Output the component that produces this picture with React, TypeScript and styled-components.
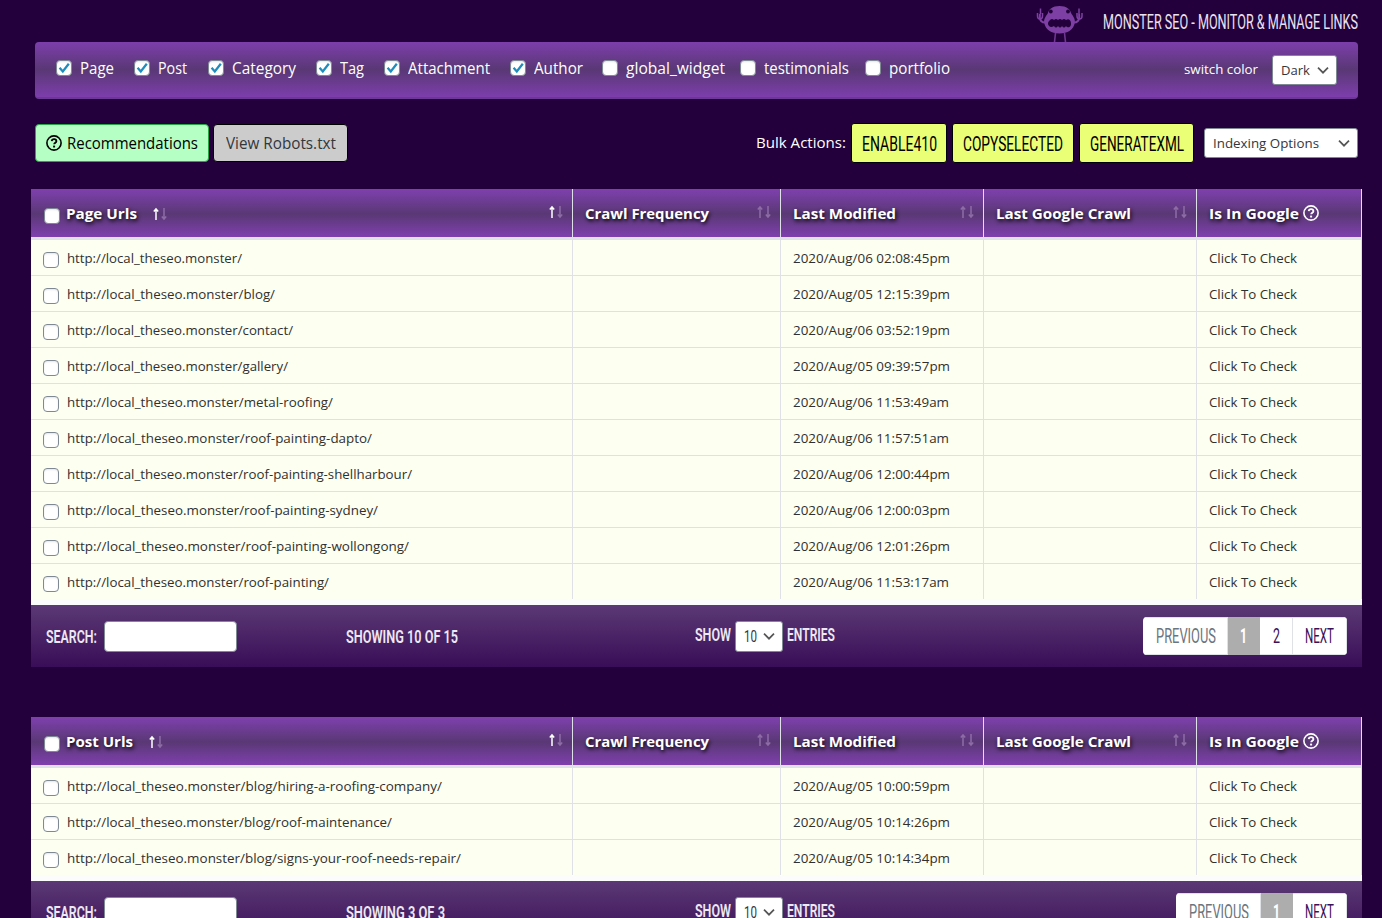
import React, { useLayoutEffect, useRef } from "react";
import styled, { createGlobalStyle } from "styled-components";

const sans = `"Open Sans", "Noto Sans", sans-serif`;
const narrow = `"Liberation Sans Narrow", Roboto, "Liberation Sans", sans-serif`;

const GlobalStyle = createGlobalStyle`
  * { box-sizing: border-box; }
  body { margin: 0; background: #23003b; overflow: hidden; font-family: ${sans}; }
`;

/* Text condensed or widened to a set width */
const FitBox = styled.span<{ $w: number }>`
  display: inline-block;
  width: ${(p) => p.$w}px;
  flex: none;
  white-space: nowrap;
`;
const FitInner = styled.span`
  display: inline-block;
  transform-origin: 0 50%;
`;
function Fit({ w, children }: { w: number; children: React.ReactNode }) {
  const ref = useRef<HTMLSpanElement>(null);
  useLayoutEffect(() => {
    const el = ref.current;
    if (el && el.offsetWidth) {
      el.style.transform = "none";
      el.style.transform = `scaleX(${w / el.getBoundingClientRect().width})`;
    }
  }, [w, children]);
  return (
    <FitBox $w={w}>
      <FitInner ref={ref}>{children}</FitInner>
    </FitBox>
  );
}

const Page = styled.div`
  height: 918px;
  overflow: hidden;
`;
const Brand = styled.header`
  height: 42px;
  padding-right: 24px;
  display: flex;
  justify-content: flex-end;
  gap: 19px;
`;
const BrandTitle = styled.div`
  font: 400 19.5px/46px ${narrow};
  color: #e9e2ef;
`;
const Filters = styled.div`
  height: 57px;
  margin: 0 24px 0 35px;
  padding: 0 21px;
  border-radius: 4px;
  border-bottom: 2px solid #6d3797;
  background: linear-gradient(#7d3eac, #593874 50%, #7d3eac);
  display: flex;
  color: #fff;
  font-size: 15.5px;
`;
const Filter = styled.label<{ $w: number }>`
  width: ${(p) => p.$w}px;
  flex: none;
  display: flex;
  align-items: center;
  gap: 8px;
  height: 52px;
`;
const Box = styled.span<{ $drop?: number }>`
  width: 16px;
  height: 16px;
  flex: none;
  display: block;
  border: 1px solid #7e8993;
  border-radius: 4px;
  background: #fff;
  box-shadow: inset 0 1px 2px rgba(0, 0, 0, 0.1);
  margin-top: ${(p) => p.$drop || 0}px;
  svg { display: block; }
`;
const Switch = styled.div`
  margin-left: auto;
  display: flex;
  align-items: center;
  gap: 14px;
  font-size: 12.5px;
  height: 55px;
`;
const Select = styled.div<{ $w: number; $h: number; $pad: number }>`
  width: ${(p) => p.$w}px;
  height: ${(p) => p.$h}px;
  flex: none;
  border: 1px solid #7e8993;
  border-radius: 3px;
  background: #fff;
  color: #32373c;
  display: flex;
  align-items: center;
  justify-content: space-between;
  padding: 0 7px 0 ${(p) => p.$pad}px;
  font-size: 13px;
`;
const Actions = styled.div`
  display: flex;
  align-items: center;
  margin: 24px 24px 0 35px;
  height: 40px;
`;
const Button = styled.button<{ $w: number; $bg: string; $line: string; $color: string }>`
  width: ${(p) => p.$w}px;
  height: 38px;
  flex: none;
  padding: 0;
  border: 1px solid ${(p) => p.$line};
  border-radius: 4px;
  background: ${(p) => p.$bg};
  color: ${(p) => p.$color};
  display: flex;
  align-items: center;
  justify-content: center;
  gap: 5px;
  font: 400 15.5px ${sans};
  margin-right: 4px;
`;
const Bulk = styled.div`
  margin-left: auto;
  display: flex;
  align-items: center;
  color: #fff;
  font-size: 15px;
`;
const BulkLabel = styled.div`
  margin: -2px 5px 0 0;
`;
const BulkButton = styled.button<{ $w: number }>`
  width: ${(p) => p.$w}px;
  height: 40px;
  padding: 0;
  border: 1px solid #000;
  border-radius: 3px;
  background: #eaff75;
  color: #000;
  font: 400 21px ${narrow};
  line-height: 40px;
  margin-right: 5px;
`;
const BulkSelect = styled.div`
  margin-left: 5px;
`;
const Table = styled.section`
  margin: 26px 20px 50px 31px;
  background: #fcfcfc;
`;
const columns = "542px 208px 203px 213px 165px";
const HeadRow = styled.div`
  display: grid;
  grid-template-columns: ${columns};
  height: 51px;
  border-bottom: 3px solid #dee2e6;
  background: linear-gradient(#7f40ae, #593874 52%, #7f40ae);
`;
const HeadCell = styled.div`
  display: flex;
  align-items: center;
  padding: 0 8px 0 12px;
  border-right: 1px solid #dee2e6;
  color: #fff;
  font-size: 15px;
  font-weight: 700;
  text-shadow: 1px 2px 4px #000;
`;
const Arrows = styled.svg<{ $push?: boolean }>`
  width: 16px;
  height: 14px;
  flex: none;
  margin-left: ${(p) => (p.$push ? "auto" : "15px")};
  margin-bottom: ${(p) => (p.$push ? "3px" : "0")};
  margin-top: ${(p) => (p.$push ? "0" : "2px")};
`;
const Row = styled.div`
  display: grid;
  grid-template-columns: ${columns};
  height: 36px;
  background: #fdfff1;
  &:last-child { height: 35px; }
`;
const Cell = styled.div`
  display: flex;
  align-items: center;
  padding: 0 12px;
  border-right: 1px solid #dee2e6;
  border-bottom: 1px solid #dee2e6;
  font-size: 13.2px;
  color: #303030;
  ${Row}:last-child & { border-bottom: 0; }
`;
const Gap = styled.span<{ $w: number }>`
  width: ${(p) => p.$w}px;
  flex: none;
`;
const Foot = styled.div`
  margin-top: 6px;
  height: 62px;
  padding: 0 15px;
  display: flex;
  align-items: center;
  background: linear-gradient(#5b3975, #390d57);
  color: #eee8f2;
  font: 600 19px ${narrow};
`;
const Search = styled.div`
  width: 300px;
  display: flex;
  align-items: center;
  gap: 7px;
`;
const Input = styled.div`
  width: 133px;
  height: 31px;
  border: 1px solid #7e8993;
  border-radius: 4px;
  background: #fff;
`;
const Showing = styled.div`
  width: 349px;
`;
const Length = styled.div`
  display: flex;
  align-items: center;
  gap: 4px;
  > span { margin-top: -3px; }
  ${Select} { font: 400 16px ${narrow}; }
`;
const Pager = styled.div`
  margin-left: auto;
  display: flex;
  height: 38px;
  border-radius: 4px;
  overflow: hidden;
  font-weight: 400;
  font-size: 20px;
  background: #fff;
`;
const PageLink = styled.a<{ $w: number; $kind?: "off" | "on" }>`
  width: ${(p) => p.$w}px;
  display: flex;
  align-items: center;
  justify-content: center;
  border: 1px solid #dee2e6;
  border-left-width: 0;
  color: ${(p) => (p.$kind === "off" ? "#6c757d" : p.$kind === "on" ? "#fff" : "#3a1059")};
  ${(p) => p.$kind === "on" && "background:#adadad;border-color:#adadad;font-weight:700;"}
`;

const Monster = () => (
  <svg width="48" height="42" viewBox="0 0 48 42" fill="none">
    <path d="M13 22C5 24 3 20 4 14M34 22c8 2 10-2 9-8" stroke="#7d3fa3" strokeWidth="2" />
    <path d="M1.500 13v3q0 3 2.500 3t2.500-3v-3M4.500 14V8.500M46 13v3q0 3-2.500 3T41 16v-3M43 14V8.500" stroke="#7d3fa3" strokeWidth="1.500" />
    <path d="M23.500 6c7 0 11 3.500 11.500 7 2 3 4.500 6 3.800 10-1.300 6.500-7 10.500-15.300 10.500S9.500 29.500 8.200 23C7.500 19 10 16 12 13c.5-3.500 4.500-7 11.500-7Z" fill="#7d3fa3" />
    <path d="M19.500 33 18.500 42M28.500 33 29.500 42" stroke="#6d3790" strokeWidth="1.600" />
    <g fill="#23003b">
      <circle cx="14.800" cy="11.500" r="1.900" />
      <circle cx="32" cy="11.500" r="1.900" />
      <path d="M14 20q2-2 4 0 2-2 4 0 2-2 4 0 2-2 4 0 3-2 4.500 1 1.500 4-1 6-2.500 1-3.500-1-2 3-4 0-2 3-4 0-2 3-4 0-3 2-5 0-2.500-3 1-6Z" />
    </g>
  </svg>
);
const Check = ({ on, drop }: { on?: boolean; drop?: number }) => (
  <Box $drop={drop}>
    {on && (
      <svg width="14" height="14" viewBox="0 0 14 14">
        <path d="M2.600 6.800 5.800 10.400 11.800 2.800" fill="none" stroke="#1e8cbe" strokeWidth="2.300" />
      </svg>
    )}
  </Box>
);
const Chevron = () => (
  <svg width="12" height="8" viewBox="0 0 12 8">
    <path d="M1 1.700 6 6.700 11 1.700" fill="none" stroke="#555" strokeWidth="1.700" />
  </svg>
);
const Question = () => (
  <svg width="16" height="16" viewBox="0 0 16 16" fill="none" stroke="currentColor">
    <circle cx="8" cy="8" r="7.100" strokeWidth="1.600" />
    <path d="M5.700 6.200C5.900 4.700 7 4.200 8.100 4.200c1.300 0 2.300.8 2.300 2 0 1.500-2.200 1.500-2.200 3.100" strokeWidth="1.800" />
    <path d="M8.100 10.600v1.900" strokeWidth="2" />
  </svg>
);
const Sort = ({ up, push }: { up?: boolean; push?: boolean }) => (
  <Arrows $push={push} viewBox="0 0 16 14" fill="none" strokeWidth="1.500">
    <path d="M4 13V2M1.800 4.500 4 2 6.200 4.500" stroke={up ? "#fff" : "#8d6ca6"} />
    <path d="M12 1v11M9.800 9.500 12 12l2.200-2.500" stroke="#8d6ca6" />
  </Arrows>
);

const filters: [string, number, number, boolean][] = [
  ["Page", 34, 78, true],
  ["Post", 29, 74, true],
  ["Category", 64, 108, true],
  ["Tag", 24, 68, true],
  ["Attachment", 82, 126, true],
  ["Author", 49, 92, true],
  ["global_widget", 99, 138, false],
  ["testimonials", 85, 125, false],
  ["portfolio", 61, 90, false],
];
const site = "http://local_theseo.monster/";
type Link = [string, number, string];
const pages: Link[] = [
  ["", 175, "2020/Aug/06 02:08:45pm"],
  ["blog/", 208, "2020/Aug/05 12:15:39pm"],
  ["contact/", 226, "2020/Aug/06 03:52:19pm"],
  ["gallery/", 221, "2020/Aug/05 09:39:57pm"],
  ["metal-roofing/", 266, "2020/Aug/06 11:53:49am"],
  ["roof-painting-dapto/", 305, "2020/Aug/06 11:57:51am"],
  ["roof-painting-shellharbour/", 345, "2020/Aug/06 12:00:44pm"],
  ["roof-painting-sydney/", 311, "2020/Aug/06 12:00:03pm"],
  ["roof-painting-wollongong/", 342, "2020/Aug/06 12:01:26pm"],
  ["roof-painting/", 262, "2020/Aug/06 11:53:17am"],
];
const posts: Link[] = [
  ["blog/hiring-a-roofing-company/", 375, "2020/Aug/05 10:00:59pm"],
  ["blog/roof-maintenance/", 325, "2020/Aug/05 10:14:26pm"],
  ["blog/signs-your-roof-needs-repair/", 394, "2020/Aug/05 10:14:34pm"],
];

interface TableProps {
  title: string;
  titleWidth: number;
  links: Link[];
  showing: string;
  showingWidth: number;
  second?: boolean;
}
function UrlTable({ title, titleWidth, links, showing, showingWidth, second }: TableProps) {
  return (
    <Table>
      <HeadRow>
        <HeadCell>
          <Gap $w={1} />
          <Check drop={5} />
          <Gap $w={6} />
          <Fit w={titleWidth}>{title}</Fit>
          <Sort up />
          <Sort up push />
        </HeadCell>
        <HeadCell><Fit w={124}>Crawl Frequency</Fit><Sort push /></HeadCell>
        <HeadCell><Fit w={103}>Last Modified</Fit><Sort push /></HeadCell>
        <HeadCell><Fit w={135}>Last Google Crawl</Fit><Sort push /></HeadCell>
        <HeadCell><Fit w={90}>Is In Google</Fit><Gap $w={4} /><Question /></HeadCell>
      </HeadRow>
      <div>
        {links.map(([path, width, date]) => (
          <Row key={path}>
            <Cell>
              <Check drop={4} />
              <Gap $w={8} />
              <Fit w={width}>{site + path}</Fit>
            </Cell>
            <Cell />
            <Cell><Fit w={date.endsWith("am") ? 156 : 157}>{date}</Fit></Cell>
            <Cell />
            <Cell><Fit w={88}>Click To Check</Fit></Cell>
          </Row>
        ))}
      </div>
      <Foot>
        <Search><Fit w={51}>SEARCH:</Fit><Input /></Search>
        <Showing><Fit w={showingWidth}>{showing}</Fit></Showing>
        <Length>
          <Fit w={36}>SHOW</Fit>
          <Select $w={48} $h={31} $pad={8}><Fit w={13}>10</Fit><Chevron /></Select>
          <Fit w={48}>ENTRIES</Fit>
        </Length>
        <Pager>
          <PageLink $w={85} $kind="off"><Gap $w={1} /><Fit w={60}>PREVIOUS</Fit></PageLink>
          <PageLink $w={32} $kind="on"><Fit w={7}>1</Fit></PageLink>
          {second && <PageLink $w={33}><Fit w={7}>2</Fit></PageLink>}
          <PageLink $w={54}><Fit w={29}>NEXT</Fit></PageLink>
        </Pager>
      </Foot>
    </Table>
  );
}

export default function App() {
  return (
    <Page>
      <GlobalStyle />
      <Brand>
        <Monster />
        <BrandTitle><Fit w={255}>MONSTER SEO - MONITOR &amp; MANAGE LINKS</Fit></BrandTitle>
      </Brand>
      <Filters>
        {filters.map(([name, w, step, on]) => (
          <Filter key={name} $w={step}>
            <Check on={on} />
            <Fit w={w}>{name}</Fit>
          </Filter>
        ))}
        <Switch>
          <Fit w={74}>switch color</Fit>
          <Select $w={65} $h={30} $pad={8}><Fit w={29}>Dark</Fit><Chevron /></Select>
        </Switch>
      </Filters>
      <Actions>
        <Button $w={174} $bg="#b5ffc4" $line="#28a745" $color="#000">
          <Question />
          <Fit w={131}>Recommendations</Fit>
        </Button>
        <Button $w={135} $bg="#ccc" $line="#000" $color="#32373c">
          <Fit w={110}>View Robots.txt</Fit>
        </Button>
        <Bulk>
          <BulkLabel><Fit w={90}>Bulk Actions:</Fit></BulkLabel>
          <BulkButton $w={96}><Fit w={75}>ENABLE410</Fit></BulkButton>
          <BulkButton $w={122}><Fit w={100}>COPYSELECTED</Fit></BulkButton>
          <BulkButton $w={115}><Fit w={94}>GENERATEXML</Fit></BulkButton>
          <BulkSelect>
            <Select $w={154} $h={30} $pad={8}><Fit w={106}>Indexing Options</Fit><Chevron /></Select>
          </BulkSelect>
        </Bulk>
      </Actions>
      <UrlTable title="Page Urls" titleWidth={71} links={pages} showing="SHOWING 10 OF 15" showingWidth={112} second />
      <UrlTable title="Post Urls" titleWidth={67} links={posts} showing="SHOWING 3 OF 3" showingWidth={99} />
    </Page>
  );
}
